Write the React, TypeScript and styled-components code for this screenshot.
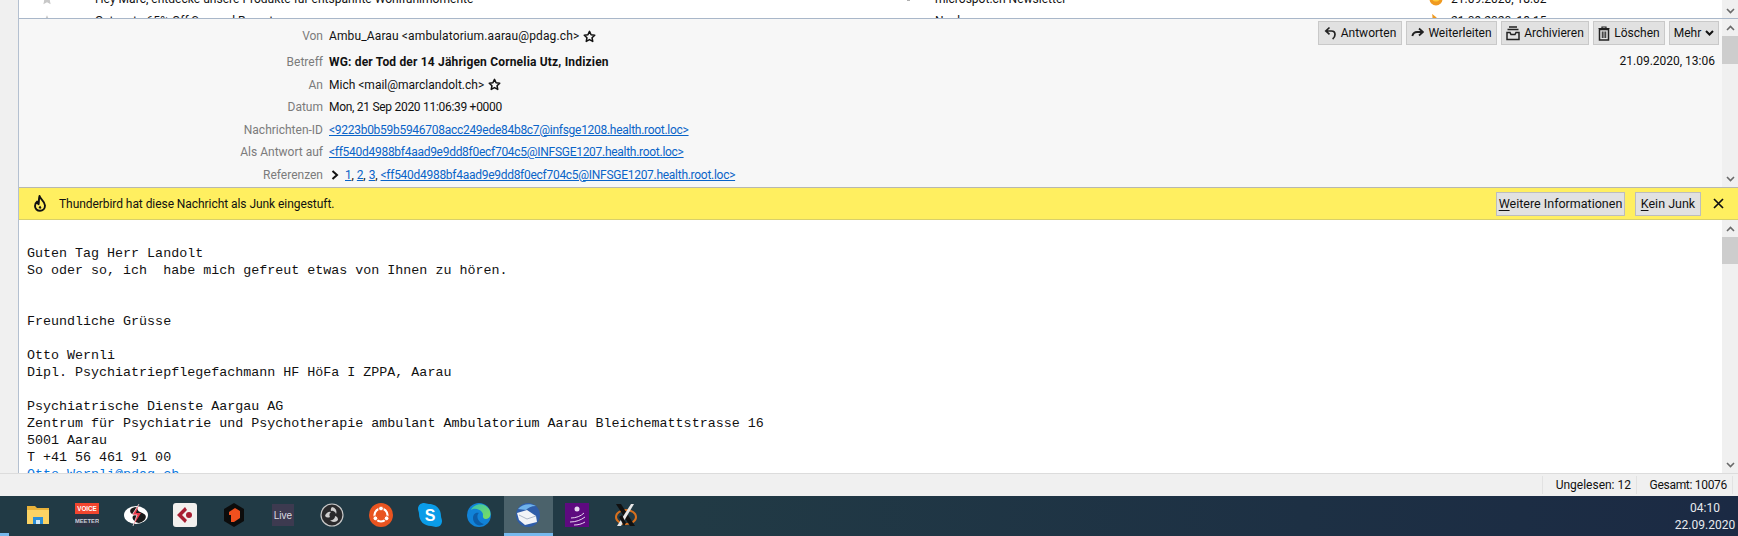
import React from "react";
import styled, { createGlobalStyle } from "styled-components";

const Global = createGlobalStyle`
  html, body { margin: 0; padding: 0; background: #fff; overflow: hidden; }
  * { box-sizing: border-box; }
`;

const uiFont = `Roboto, "Open Sans", "Liberation Sans", sans-serif`;

const Page = styled.div`
  width: 1738px;
  height: 536px;
  display: flex;
  flex-direction: column;
  overflow: hidden;
  font-family: ${uiFont};
  font-size: 12px;
  color: #111;
`;

const Main = styled.div`
  flex: 1;
  min-height: 0;
  display: flex;
`;

const Rail = styled.div`
  width: 19px;
  flex: none;
  background: #f0f0f0;
  border-right: 1px solid #b4c0d0;
`;

const Content = styled.div`
  flex: 1;
  min-width: 0;
  display: flex;
  flex-direction: column;
`;

const ListPane = styled.div`
  height: 18px;
  display: flex;
  background: #fff;
  overflow: hidden;
`;

const ListRows = styled.div`
  flex: 1;
  margin-top: -12px;
`;

const ListRow = styled.div`
  height: 22px;
  display: grid;
  grid-template-columns: 76px 841px 1fr;
  align-items: center;
  font-size: 12.05px;
  white-space: nowrap;
`;

const RowStar = styled.div`
  padding-left: 21px;
  display: flex;
`;

const RowSender = styled.div`
  display: flex;
  align-items: center;
  gap: 25px;
  margin-left: -29px;
`;

const Dot = styled.span`
  width: 3px;
  height: 3px;
  background: #b0b0b0;
`;

const ListDates = styled.div`
  width: 293px;
  margin-top: -12px;
  flex: none;
`;

const ListDateRow = styled.div`
  height: 22px;
  display: flex;
  align-items: center;
  gap: 8px;
  white-space: nowrap;
`;

const ScrollTrack = styled.div`
  width: 16px;
  flex: none;
  background: #f0f0f0;
  display: flex;
  flex-direction: column;
  align-items: center;
  color: #666;
`;

const ScrollEnd = styled.div<{ $h?: number }>`
  height: ${(p) => p.$h ?? 17}px;
  width: 100%;
  flex: none;
  display: flex;
  align-items: center;
  justify-content: center;
`;

const ScrollThumb = styled.div<{ $h: number }>`
  width: 16px;
  height: ${(p) => p.$h}px;
  background: #cdcdcd;
  flex: none;
`;

const ScrollFill = styled.div`
  flex: 1;
`;

const HeaderPane = styled.div`
  height: 169px;
  display: flex;
  background: #f7f7f7;
  border-top: 1px solid #a9b7c9;
`;

const Fields = styled.div`
  flex: 1;
  padding-top: 6px;
`;

const Field = styled.div<{ $tall?: boolean }>`
  display: grid;
  grid-template-columns: 304px 1fr;
  column-gap: 6px;
  align-items: center;
  height: ${(p) => (p.$tall ? 26 : 22.5)}px;
  padding-bottom: ${(p) => (p.$tall ? 4 : 0)}px;
`;

const FieldName = styled.div`
  text-align: right;
  color: #7b7b7b;
`;

const FieldValue = styled.div<{ $spacing?: number; $bold?: boolean }>`
  display: flex;
  align-items: center;
  font-weight: ${(p) => (p.$bold ? 700 : 400)};
  letter-spacing: ${(p) => p.$spacing ?? 0}px;
  white-space: nowrap;
`;

const Link = styled.a`
  color: #0a64c8;
  text-decoration: underline;
  letter-spacing: -0.28px;
`;

const LinkGap = styled.span`
  margin-right: 3px;
`;

const Aside = styled.div`
  width: 404px;
  display: flex;
  flex-direction: column;
  align-items: flex-end;
  padding: 2px 3px 0 0;
`;

const Toolbar = styled.div`
  display: flex;
  gap: 4px;
`;

const ToolButton = styled.div<{ $w: number }>`
  width: ${(p) => p.$w}px;
  height: 24px;
  display: flex;
  align-items: center;
  justify-content: center;
  gap: 4px;
  background: #e1e1e1;
  border: 1px solid #c9c9c9;
  white-space: nowrap;
`;

const DateText = styled.div`
  margin-top: 9px;
  padding-right: 4px;
`;

const JunkBar = styled.div`
  height: 33px;
  display: flex;
  align-items: center;
  background: #ffef60;
  border-top: 1px solid #b8b8b0;
  border-bottom: 1px solid #d8cf6a;
  padding: 0 14px;
`;

const JunkText = styled.div`
  margin-left: 12px;
  flex: 1;
  font-size: 12px;
  letter-spacing: -0.06px;
`;

const JunkButton = styled.div<{ $w: number }>`
  width: ${(p) => p.$w}px;
  height: 24px;
  margin-right: 10px;
  display: flex;
  align-items: center;
  justify-content: center;
  background: #e1e1e1;
  border: 1px solid #bdbdbd;
  font-size: 12.5px;
  white-space: nowrap;

  u { text-underline-offset: 2px; }
`;

const CloseIcon = styled.div`
  margin-left: 2px;
  display: flex;
`;

const BodyPane = styled.div`
  flex: 1;
  min-height: 0;
  display: flex;
  background: #fff;
`;

const MessageText = styled.pre`
  flex: 1;
  margin: 0;
  padding: 8px 0 0 8px;
  overflow: hidden;
  font-family: "Liberation Mono", "DejaVu Sans Mono", monospace;
  font-size: 13.35px;
  line-height: 17px;
  color: #111;

  a { color: #0a78e0; }
`;

const StatusBar = styled.div`
  height: 23px;
  flex: none;
  display: flex;
  justify-content: flex-end;
  align-items: center;
  background: #f0f0f0;
  border-top: 1px solid #dcdcdc;
  padding: 0 5px 0 0;
`;

const StatusCell = styled.div<{ $w: number; $spacing?: number }>`
  width: ${(p) => p.$w}px;
  height: 18px;
  display: flex;
  align-items: center;
  justify-content: flex-end;
  padding-right: 5px;
  border-left: 1px solid #e2e2e2;
  font-size: 12px;
  letter-spacing: ${(p) => p.$spacing ?? 0}px;
`;

const StatusEnd = styled.div`
  width: 0;
  height: 18px;
  border-left: 1px solid #e2e2e2;
`;

const Taskbar = styled.div`
  height: 40px;
  flex: none;
  display: flex;
  align-items: stretch;
  background: linear-gradient(90deg, #213a45 0%, #213a45 40%, #1d3044 75%, #1b2a44 100%);
  position: relative;
  color: #e8eaee;
`;

const StartMark = styled.div`
  position: absolute;
  left: 0;
  bottom: 0;
  width: 9px;
  height: 3px;
  background: #76b9ed;
`;

const TaskIcons = styled.div`
  display: flex;
  padding-left: 13.5px;
  flex: 1;
`;

const TaskCell = styled.div<{ $active?: boolean }>`
  width: 49px;
  display: flex;
  align-items: center;
  justify-content: center;
  background: ${(p) => (p.$active ? "#4b626b" : "transparent")};
  border-bottom: 3px solid ${(p) => (p.$active ? "#76b9ed" : "transparent")};
  padding-top: 1px;
`;

const Clock = styled.div`
  width: 60px;
  margin-right: 3px;
  display: flex;
  flex-direction: column;
  align-items: center;
  justify-content: center;
  gap: 3px;
  font-size: 12px;
  line-height: 14px;
`;

const Chevron = ({ up, dark }: { up?: boolean; dark?: boolean }) => (
  <svg width="9" height="6" viewBox="0 0 9 6">
    <path
      d={up ? "M1 5 L4.5 1.5 L8 5" : "M1 1 L4.5 4.5 L8 1"}
      fill="none"
      stroke={dark ? "#111" : "#6a6a6a"}
      strokeWidth={dark ? 2 : 1.6}
    />
  </svg>
);

const Star = () => (
  <svg width="13" height="13" viewBox="0 0 24 24" style={{ marginLeft: 4 }}>
    <path d="M12 2.5l2.9 6.3 6.8.8-5 4.7 1.3 6.8-6-3.4-6 3.4 1.3-6.8-5-4.7 6.8-.8z" fill="none" stroke="#111" strokeWidth="2.8" strokeLinejoin="round" />
  </svg>
);

const ListStar = () => (
  <svg width="14" height="14" viewBox="0 0 24 24">
    <path d="M12 2l3 6.6 7 .8-5.2 4.8 1.4 7-6.2-3.6-6.2 3.6 1.4-7L2 9.4l7-.8z" fill="#c8c8c8" />
  </svg>
);

const ReplyIcon = () => (
  <svg width="13" height="14" viewBox="0 0 13 14">
    <path d="M5.5 1.5 L1.8 5 L5.5 8.3 M2 5 H7.5 C10 5 11 6.8 11 8.5 C11 10.5 10 12 8.6 13" fill="none" stroke="#222" strokeWidth="1.7" />
  </svg>
);

const ForwardIcon = () => (
  <svg width="13" height="12" viewBox="0 0 13 12">
    <path d="M8 1.5 L12 5 L8 8.5 M11.5 5 H6 C3.5 5 2 6.5 1.3 9" fill="none" stroke="#222" strokeWidth="1.8" />
  </svg>
);

const ArchiveIcon = () => (
  <svg width="14" height="15" viewBox="0 0 14 15">
    <path d="M3 1 H11 M1.5 3.5 H12.5" stroke="#222" strokeWidth="1.3" fill="none" />
    <path d="M1 6.5 H4 L5 8.5 H9 L10 6.5 H13 V13.5 H1 Z" fill="none" stroke="#222" strokeWidth="1.5" />
  </svg>
);

const TrashIcon = () => (
  <svg width="12" height="15" viewBox="0 0 12 15">
    <path d="M0.5 2.5 H11.5 M4 2.5 V1 H8 V2.5" stroke="#222" strokeWidth="1.2" fill="none" />
    <path d="M1.5 3.5 H10.5 V14 H1.5 Z" fill="none" stroke="#222" strokeWidth="1.5" />
    <path d="M4.3 5.5 V12 M6 5.5 V12 M7.7 5.5 V12" stroke="#222" strokeWidth="1" />
  </svg>
);

const FlameIcon = () => (
  <svg width="14" height="17" viewBox="0 0 14 17">
    <path d="M6.5 1 C7 4 11.8 6 12 10.5 C12 13.7 9.8 15.8 7 15.8 C4.2 15.8 2 13.8 2 11 C2 9 3 7.5 4.2 6.5 C4.3 8 4.8 8.8 5.6 9.2 C6 6.5 5.8 3.5 6.5 1 Z" fill="none" stroke="#111" strokeWidth="1.9" strokeLinejoin="round" />
    <path d="M7 10.5 C7.6 11.5 8.5 12 8.3 13 C8.1 13.9 6 14 5.7 12.8 C5.6 12 6.6 11.5 7 10.5 Z" fill="#111" />
  </svg>
);

const XIcon = () => (
  <svg width="11" height="11" viewBox="0 0 11 11">
    <path d="M1 1 L10 10 M10 1 L1 10" stroke="#111" strokeWidth="1.7" />
  </svg>
);

const Thread = ({ color }: { color: string }) => (
  <svg width="14" height="14" viewBox="0 0 14 14">
    <circle cx="7" cy="7" r="6.5" fill={color} />
    <circle cx="7" cy="5.5" r="4" fill="#ffcb3a" />
  </svg>
);

const Flame = () => (
  <svg width="14" height="14" viewBox="0 0 14 14">
    <path d="M3 0 C6 2 11 6 11 10 C11 12.5 9 14 7 14 C4 14 3 11 3 9 C3 6 4 3 3 0 Z" fill="#f09a20" />
  </svg>
);

const FolderIcon = () => (
  <svg width="24" height="24" viewBox="0 0 24 24">
    <path d="M1 3 H9 L11 5 H23 V21 H1 Z" fill="#e8b23a" />
    <path d="M1 7 H23 V21 H1 Z" fill="#fbd364" />
    <rect x="7" y="14" width="10" height="7" fill="#2b8fd8" />
    <rect x="10" y="17" width="4" height="4" fill="#cfe9fb" />
  </svg>
);

const VoicemeeterIcon = () => (
  <svg width="24" height="24" viewBox="0 0 24 24">
    <rect width="24" height="24" fill="#2c3444" />
    <rect width="24" height="11" fill="#f2452e" />
    <text x="12" y="8.3" textAnchor="middle" fontSize="6.3" fontWeight="700" fontFamily="Liberation Sans, sans-serif" fill="#fff">VOICE</text>
    <text x="12" y="20" textAnchor="middle" fontSize="5.8" fontWeight="700" fontFamily="Liberation Sans, sans-serif" fill="#c9ced8">MEETER</text>
  </svg>
);

const AudioIcon = () => (
  <svg width="26" height="24" viewBox="0 0 26 24">
    <ellipse cx="13" cy="12" rx="12" ry="9" fill="#fff" />
    <path d="M14 4 C6 4 5 10 11 12 C7 15 12 20 16 20 C22 19 25 13 21 11 C18 9 14 9 14 4 Z" fill="#1a1a1a" />
    <path d="M16 1 L9 12 H14 L10 23 L18 10 H13 Z" fill="#e83a4a" />
    <path d="M16 1 L9 12 H14 L10 23" fill="none" stroke="#fff" strokeWidth="0.7" />
  </svg>
);

const CubaseIcon = () => (
  <svg width="24" height="24" viewBox="0 0 24 24">
    <rect width="24" height="24" rx="3" fill="#f2f0ee" />
    <path d="M12 4 L4 12 L12 20 L14 17 L9 12 L14 7 Z" fill="#a81e32" />
    <circle cx="16" cy="12" r="3" fill="#a81e32" />
  </svg>
);

const ReasonIcon = () => (
  <svg width="22" height="24" viewBox="0 0 22 24">
    <path d="M11 0 L21 6 V18 L11 24 L1 18 V6 Z" fill="#0c0c0c" />
    <path d="M6 9 L12 5 L17 8 V15 L11 19 H8 V12 H6 Z" fill="#f0501e" />
  </svg>
);

const LiveIcon = () => (
  <svg width="22" height="22" viewBox="0 0 22 22">
    <rect width="22" height="22" fill="#3d3a50" />
    <text x="11" y="15" textAnchor="middle" fontSize="10" fontFamily="Liberation Sans, sans-serif" fill="#dcdce2">Live</text>
  </svg>
);

const ObsIcon = () => (
  <svg width="24" height="24" viewBox="0 0 24 24">
    <circle cx="12" cy="12" r="11" fill="#2a2a2c" stroke="#c8c8c8" strokeWidth="1.2" />
    <path d="M12 4 A5 5 0 0 1 16 11 A4 4 0 0 0 11 8 A4 4 0 0 1 12 4 Z M5 13 A5 5 0 0 1 11 9 A4 4 0 0 0 10 14 A4 4 0 0 1 5 13 Z M18 17 A5 5 0 0 1 10 17 A4 4 0 0 0 15 13 A4 4 0 0 1 18 17 Z" fill="#cfcfcf" />
  </svg>
);

const UbuntuIcon = () => (
  <svg width="24" height="24" viewBox="0 0 24 24">
    <circle cx="12" cy="12" r="12" fill="#e95420" />
    <circle cx="12" cy="12" r="6.5" fill="none" stroke="#fff" strokeWidth="2.2" />
    <circle cx="12" cy="5.5" r="2.4" fill="#fff" stroke="#e95420" />
    <circle cx="6.4" cy="15.3" r="2.4" fill="#fff" stroke="#e95420" />
    <circle cx="17.6" cy="15.3" r="2.4" fill="#fff" stroke="#e95420" />
  </svg>
);

const SkypeIcon = () => (
  <svg width="24" height="24" viewBox="0 0 24 24">
    <path d="M6 0 C3 0 0 2 0 6 C0 7 1 9 1 11 C1 18 6 23 13 23 C15 23 16 24 18 24 C22 24 24 21 24 18 C24 16 23 15 23 13 C23 6 18 1 11 1 C9 1 8 0 6 0 Z" fill="#0a9ce8" />
    <text x="12" y="17.5" textAnchor="middle" fontSize="16" fontWeight="700" fontFamily="Liberation Sans, sans-serif" fill="#fff">S</text>
  </svg>
);

const EdgeIcon = () => (
  <svg width="24" height="24" viewBox="0 0 24 24">
    <defs>
      <linearGradient id="edgeA" x1="0" y1="0" x2="1" y2="1">
        <stop offset="0" stopColor="#36c3b0" />
        <stop offset="1" stopColor="#7fe05a" />
      </linearGradient>
    </defs>
    <circle cx="12" cy="12" r="12" fill="#1183d8" />
    <path d="M4 7 C6 1 17 -2 22 6 C25 11 23 16 19 16 C15 16 16 12 16 11 C15 7 8 4 4 7 Z" fill="url(#edgeA)" />
    <path d="M6 15 C6 10 10 9 12 10 C9 12 10 19 17 21 C11 25 6 20 6 15 Z" fill="#0c5da8" />
  </svg>
);

const ThunderbirdIcon = () => (
  <svg width="24" height="24" viewBox="0 0 24 24">
    <circle cx="12" cy="12" r="12" fill="#2f5da8" />
    <path d="M2 6 C6 1 14 0 20 3 C15 3 12 5 10 7 Z" fill="#6fb2ea" />
    <path d="M1 10 L11 7 L20 13 L21 19 L9 22 L3 17 Z" fill="#f2f4f8" />
    <path d="M3 12 L11 16 L20 13" fill="none" stroke="#9aa8bc" strokeWidth="0.8" />
  </svg>
);

const SynthIcon = () => (
  <svg width="24" height="24" viewBox="0 0 24 24">
    <rect width="24" height="24" fill="#5e0a80" />
    <circle cx="12" cy="6" r="2.5" fill="#e8d8f0" />
    <path d="M6 15 C11 15 16 13 19 10 M5 19 C11 19 16 17 20 14 M9 22 C13 22 17 21 20 19" fill="none" stroke="#e8d8f0" strokeWidth="1" />
  </svg>
);

const XmingIcon = () => (
  <svg width="24" height="24" viewBox="0 0 24 24">
    <ellipse cx="12" cy="14" rx="10" ry="7" fill="none" stroke="#d8701e" strokeWidth="2" />
    <path d="M2 1 L7 1 L21 23 L16 23 Z" fill="#111" />
    <path d="M3 23 L17 1 L20 1 L7 23 Z" fill="#e8e8e8" />
    <path d="M8 12 L12 20 L10 23 L5 14 Z" fill="#111" />
  </svg>
);

const Body = `
Guten Tag Herr Landolt
So oder so, ich  habe mich gefreut etwas von Ihnen zu hören.


Freundliche Grüsse

Otto Wernli
Dipl. Psychiatriepflegefachmann HF HöFa I ZPPA, Aarau

Psychiatrische Dienste Aargau AG
Zentrum für Psychiatrie und Psychotherapie ambulant Ambulatorium Aarau Bleichemattstrasse 16
5001 Aarau
T +41 56 461 91 00
`;

const taskIcons = [
  <FolderIcon />, <VoicemeeterIcon />, <AudioIcon />, <CubaseIcon />, <ReasonIcon />, <LiveIcon />,
  <ObsIcon />, <UbuntuIcon />, <SkypeIcon />, <EdgeIcon />, <ThunderbirdIcon />, <SynthIcon />, <XmingIcon />,
];

export default function App() {
  return (
    <Page>
      <Global />
      <Main>
        <Rail />
        <Content>
          <ListPane>
            <ListRows>
              <ListRow>
                <RowStar><ListStar /></RowStar>
                <div>Hey Marc, entdecke unsere Produkte für entspannte Wohlfühlmomente</div>
                <RowSender><Dot />microspot.ch Newsletter</RowSender>
              </ListRow>
              <ListRow>
                <RowStar><ListStar /></RowStar>
                <div>Get up to 65% Off Spa and Resorts</div>
                <RowSender><Dot />Noob</RowSender>
              </ListRow>
            </ListRows>
            <ListDates>
              <ListDateRow><Thread color="#f09a20" />21.09.2020, 18:02</ListDateRow>
              <ListDateRow><Flame />21.09.2020, 18:15</ListDateRow>
            </ListDates>
            <ScrollTrack>
              <ScrollFill />
              <ScrollEnd $h={14}><Chevron /></ScrollEnd>
            </ScrollTrack>
          </ListPane>

          <HeaderPane>
            <Fields>
              <Field $tall>
                <FieldName>Von</FieldName>
                <FieldValue $spacing={0.13}>Ambu_Aarau &lt;ambulatorium.aarau@pdag.ch&gt;<Star /></FieldValue>
              </Field>
              <Field>
                <FieldName>Betreff</FieldName>
                <FieldValue $bold $spacing={0.18}>WG: der Tod der 14 Jährigen Cornelia Utz, Indizien</FieldValue>
              </Field>
              <Field>
                <FieldName>An</FieldName>
                <FieldValue>Mich &lt;mail@marclandolt.ch&gt;<Star /></FieldValue>
              </Field>
              <Field>
                <FieldName>Datum</FieldName>
                <FieldValue $spacing={-0.29}>Mon, 21 Sep 2020 11:06:39 +0000</FieldValue>
              </Field>
              <Field>
                <FieldName>Nachrichten-ID</FieldName>
                <FieldValue><Link>&lt;9223b0b59b5946708acc249ede84b8c7@infsge1208.health.root.loc&gt;</Link></FieldValue>
              </Field>
              <Field>
                <FieldName>Als Antwort auf</FieldName>
                <FieldValue><Link>&lt;ff540d4988bf4aad9e9dd8f0ecf704c5@INFSGE1207.health.root.loc&gt;</Link></FieldValue>
              </Field>
              <Field>
                <FieldName>Referenzen</FieldName>
                <FieldValue>
                  <svg width="8" height="10" viewBox="0 0 8 10" style={{ margin: "0 6px 0 2px" }}>
                    <path d="M1.5 1 L6 5 L1.5 9" fill="none" stroke="#111" strokeWidth="2" />
                  </svg>
                  <LinkGap><Link>1</Link>,</LinkGap>
                  <LinkGap><Link>2</Link>,</LinkGap>
                  <LinkGap><Link>3</Link>,</LinkGap>
                  <Link>&lt;ff540d4988bf4aad9e9dd8f0ecf704c5@INFSGE1207.health.root.loc&gt;</Link>
                </FieldValue>
              </Field>
            </Fields>
            <Aside>
              <Toolbar>
                <ToolButton $w={84}><ReplyIcon />Antworten</ToolButton>
                <ToolButton $w={91}><ForwardIcon />Weiterleiten</ToolButton>
                <ToolButton $w={88}><ArchiveIcon />Archivieren</ToolButton>
                <ToolButton $w={72}><TrashIcon />Löschen</ToolButton>
                <ToolButton $w={50}>Mehr<Chevron dark /></ToolButton>
              </Toolbar>
              <DateText>21.09.2020, 13:06</DateText>
            </Aside>
            <ScrollTrack>
              <ScrollEnd><Chevron up /></ScrollEnd>
              <ScrollThumb $h={28} />
              <ScrollFill />
              <ScrollEnd><Chevron /></ScrollEnd>
            </ScrollTrack>
          </HeaderPane>

          <JunkBar>
            <FlameIcon />
            <JunkText>Thunderbird hat diese Nachricht als Junk eingestuft.</JunkText>
            <JunkButton $w={129}><span><u>W</u>eitere Informationen</span></JunkButton>
            <JunkButton $w={66}><span><u>K</u>ein Junk</span></JunkButton>
            <CloseIcon><XIcon /></CloseIcon>
          </JunkBar>

          <BodyPane>
            <MessageText>
              {Body}
              <a href="#mail">Otto.Wernli@pdag.ch</a>
            </MessageText>
            <ScrollTrack>
              <ScrollEnd><Chevron up /></ScrollEnd>
              <ScrollThumb $h={27} />
              <ScrollFill />
              <ScrollEnd><Chevron /></ScrollEnd>
            </ScrollTrack>
          </BodyPane>
        </Content>
      </Main>
      <StatusBar>
        <StatusCell $w={94}>Ungelesen: 12</StatusCell>
        <StatusCell $w={96} $spacing={-0.3}>Gesamt: 10076</StatusCell>
        <StatusEnd />
      </StatusBar>
      <Taskbar>
        <StartMark />
        <TaskIcons>
          {taskIcons.map((icon, i) => (
            <TaskCell key={i} $active={i === 10}>{icon}</TaskCell>
          ))}
        </TaskIcons>
        <Clock>
          <div>04:10</div>
          <div>22.09.2020</div>
        </Clock>
      </Taskbar>
    </Page>
  );
}
